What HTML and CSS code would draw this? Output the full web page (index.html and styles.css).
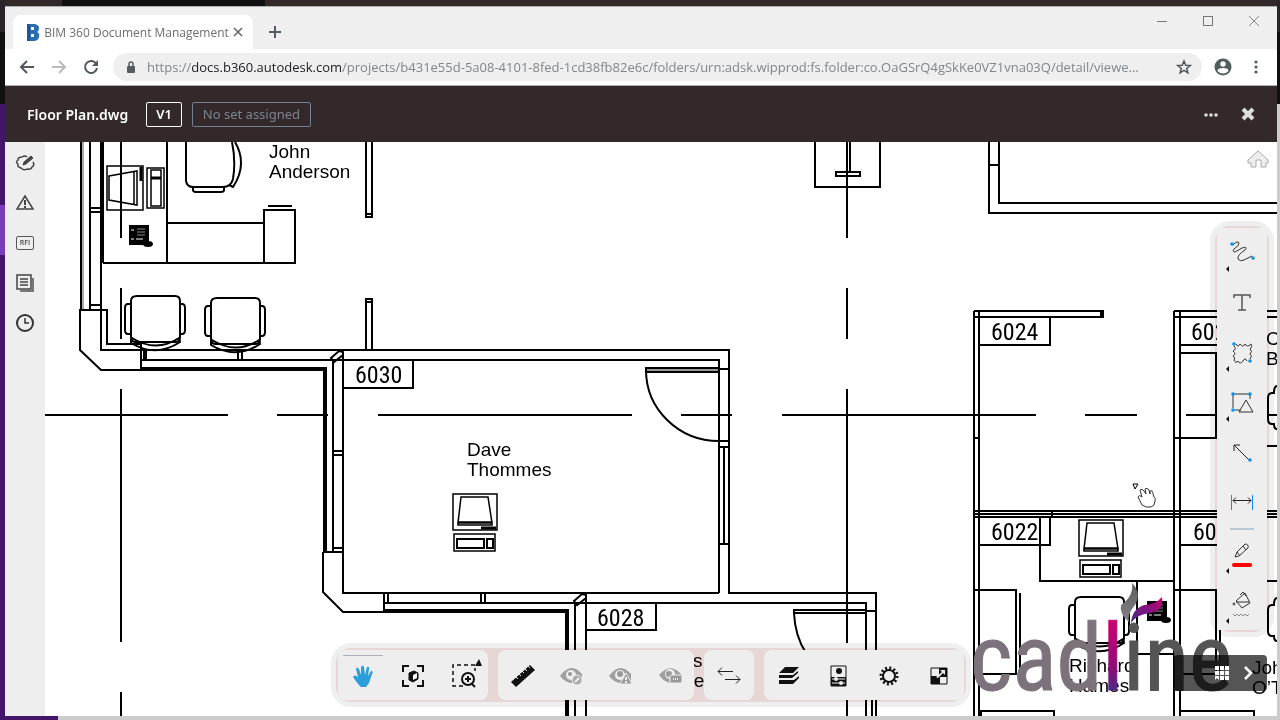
FILE: index.html
```html
<!DOCTYPE html>
<html lang="en">
<head>
<meta charset="utf-8">
<title>BIM 360 Document Management</title>
<link rel="stylesheet" href="styles.css">
</head>
<body>
<div class="window">
  <header class="tabstrip">
    <div class="tab">
      <svg class="favicon" viewBox="0 0 14 18" width="14" height="18"><path d="M1 1h8q4 1 4 4t-2 4q3 1 2 5t-5 4H1z" fill="#2b6db3"/><path d="M5 4h3v3H5zM5 11h3v3H5z" fill="#fff"/><path d="M1 1h3v17H1z" fill="#1d5596"/></svg>
      <span class="tab-title">BIM 360 Document Management</span>
      <button class="plain" aria-label="Close tab"><svg width="10" height="10" viewBox="0 0 10 10"><path d="M1 1l8 8M9 1L1 9" stroke="#5f6368" stroke-width="1.500"/></svg></button>
    </div>
    <button class="plain newtab" aria-label="New tab"><svg width="12" height="12" viewBox="0 0 12 12"><path d="M6 0v12M0 6h12" stroke="#555d60" stroke-width="2"/></svg></button>
    <div class="winbuttons">
      <button class="plain" aria-label="Minimize"><svg width="12" height="12" viewBox="0 0 12 12"><path d="M1 6.500h10" stroke="#777"/></svg></button>
      <button class="plain" aria-label="Maximize"><svg width="12" height="12" viewBox="0 0 12 12"><rect x="1.500" y="1.500" width="9" height="9" fill="none" stroke="#777"/></svg></button>
      <button class="plain" aria-label="Close"><svg width="12" height="12" viewBox="0 0 12 12"><path d="M1 1l10 10M11 1L1 11" stroke="#888"/></svg></button>
    </div>
  </header>

  <nav class="addressbar">
    <button class="plain" aria-label="Back"><svg width="16" height="16" viewBox="0 0 16 16"><path d="M15 8H2M8 2L2 8l6 6" fill="none" stroke="#4f595c" stroke-width="2"/></svg></button>
    <button class="plain" aria-label="Forward"><svg width="16" height="16" viewBox="0 0 16 16"><path d="M1 8h13M8 2l6 6-6 6" fill="none" stroke="#b9bbbc" stroke-width="2"/></svg></button>
    <button class="plain" aria-label="Reload"><svg width="16" height="16" viewBox="0 0 16 16"><path d="M13 4.500A6 6 0 1 0 14 9" fill="none" stroke="#4f595c" stroke-width="2"/><path d="M15 1v6H9z" fill="#4f595c"/></svg></button>
    <div class="omnibox">
      <svg width="10" height="13" viewBox="0 0 10 13"><rect x="1" y="5" width="8" height="7" rx="1" fill="#555d60"/><path d="M3 5V3a2 2 0 0 1 4 0v2" fill="none" stroke="#555d60" stroke-width="1.500"/></svg>
      <div class="url" role="textbox" aria-label="Address" contenteditable="true" spellcheck="false">https://<span class="host">docs.b360.autodesk.com</span>/projects/b431e55d-5a08-4101-8fed-1cd38fb82e6c/folders/urn:adsk.wipprod:fs.folder:co.OaGSrQ4gSkKe0VZ1vna03Q/detail/viewe...</div>
      <button class="plain" aria-label="Bookmark"><svg width="16" height="16" viewBox="0 0 16 16"><path d="M8 2l1.700 4.200 4.500.3-3.500 2.900 1.200 4.400L8 11.400l-3.900 2.400 1.200-4.400L1.800 6.500l4.500-.3z" fill="none" stroke="#4f595c" stroke-width="1.500"/></svg></button>
    </div>
    <button class="plain profile" aria-label="Profile"><svg width="18" height="18" viewBox="0 0 18 18"><circle cx="9" cy="9" r="8.500" fill="#4f5c60"/><circle cx="9" cy="6" r="2.700" fill="#fff"/><path d="M3.500 13q0-3 5.500-3t5.500 3Q12 15.500 9 15.500T3.500 13z" fill="#fff"/></svg></button>
    <button class="plain" aria-label="Menu"><svg width="6" height="14" viewBox="0 0 6 14"><g fill="#4f5c60"><circle cx="3" cy="2" r="1.600"/><circle cx="3" cy="7" r="1.600"/><circle cx="3" cy="12" r="1.600"/></g></svg></button>
  </nav>

  <header class="docbar">
    <h1 class="docname">Floor Plan.dwg</h1>
    <button class="version">V1</button>
    <button class="setname">No set assigned</button>
    <button class="plain more" aria-label="More"><svg width="16" height="6" viewBox="0 0 16 6"><g fill="#ddd"><circle cx="3" cy="4" r="1.800"/><circle cx="8" cy="4" r="1.800"/><circle cx="13" cy="4" r="1.800"/></g></svg></button>
    <button class="plain" aria-label="Close document"><svg width="14" height="14" viewBox="0 0 14 14"><path d="M2 2l10 10M12 2L2 12" stroke="#ddd" stroke-width="4"/></svg></button>
  </header>

  <main class="viewer">
    <aside class="rail">
      <button aria-label="Markups"><svg width="20" height="20" viewBox="0 0 20 20" fill="none" stroke="#444" stroke-width="1.500"><path d="M12 4Q10 2 7 4 3 4 3 7q-3 2 0 4-1 3 3 4 3 3 6 1 4 1 5-2 3-2 1-5"/><path d="M8 12l1-3 7-6 2 2-7 6z" fill="#444" stroke-width="1"/></svg></button>
      <button aria-label="Issues"><svg width="20" height="20" viewBox="0 0 20 20" fill="none" stroke="#444" stroke-width="1.500"><path d="M10 3l8 13H2z"/><path d="M10 7v5M10 13v2" stroke-width="2"/></svg></button>
      <button class="rfi" aria-label="Requests for information">RFI</button>
      <button aria-label="Sheets"><svg width="20" height="20" viewBox="0 0 20 20" fill="none" stroke="#444" stroke-width="1.500"><path d="M2 2h14v14H2zM5 6h8M5 9h8M5 12h8"/><path d="M18 5v13H5" stroke="#777" stroke-width="2"/></svg></button>
      <button aria-label="History"><svg width="20" height="20" viewBox="0 0 20 20" fill="none" stroke="#333" stroke-width="2"><circle cx="10" cy="10" r="8"/><path d="M10 5v5h4" stroke-width="1.500"/></svg></button>
    </aside>

    <section class="canvas">
      <svg class="plan" viewBox="45 142 1232 574" preserveAspectRatio="xMidYMid slice">
        <defs>
          <g id="seat"><path d="M6 0h38q5 0 5 5v36q0 5-5 5H5q-5 0-5-5V5q0-5 6-5z"/><path d="M0 8h-3q-3 0-3 4v22q0 4 3 4h3M49 8h2q3 0 3 4v22q0 4-3 4h-2"/><path d="M0 44l1-2q24 15 47 0l1 4Q25 62 0 47z"/></g>
          <g id="pc" stroke-width="1.500"><path d="M0 0h44v36H0zM8 3h27l4 26H5zM5 28h34v3H5z"/><path d="M28 34h15" stroke-width="3"/><path d="M1 40h41v17H1z"/><path d="M4 45h27v9H4zM34 45h6v9h-6z" stroke-width="2"/></g>
          <g id="phone"><path d="M0 0h18v18H0z" fill="#000"/><path d="M7 3h8M7 6h8M7 9h8" stroke="#888" stroke-width="1"/><path d="M1 4h3M1 13h3M6 13h7" stroke="#fff" stroke-width="1"/><ellipse cx="18" cy="18" rx="4" ry="2" fill="#000"/></g>
          <linearGradient id="stem" x1="0" y1="0" x2="0" y2="1"><stop offset=".2" stop-color="#c80070"/><stop offset=".6" stop-color="#8c0e78"/><stop offset=".8" stop-color="#4a2a86"/></linearGradient>
          <linearGradient id="leaf" x1="0" y1="1" x2="1" y2="0"><stop offset="0" stop-color="#4a2a86"/><stop offset=".5" stop-color="#7d1680"/><stop offset="1" stop-color="#d1006f"/></linearGradient>
          <linearGradient id="ash" x1="0" y1="0" x2="0" y2="1"><stop offset="0" stop-color="#555d5d"/><stop offset="1" stop-color="#8a8288"/></linearGradient>
        </defs>
        <g class="ink">
          <!-- grid axes -->
          <path d="M121 142v96M121 288v51M121 389v253M121 692v24M847 142v96M847 288v51M847 389v254M847 693v23"/>
          <path d="M45 415h183M277 415h51M378 415h254M681 415h51M782 415h254M1085 415h52M1186 415h91"/>
          <!-- office of John Anderson -->
          <path d="M81 142v168M90 142v168M101 142v168M103 142v121M90 208h11M90 212h11M90 305h11"/>
          <path d="M83 142v168" class="thin"/>
          <path d="M103 263h192M167 142v121M167 223h97M264 210h31v53h-31zM268 206h24"/>
          <path d="M107 166h36v44h-36zM109 176l28-5v34l-28-5zM134 172v33M147 168h17v40h-17zM151 170h10v36h-10z" stroke-width="1.500"/>
          <path d="M141 167v14M151 178h10" stroke-width="3"/>
          <path d="M186 142v39q1 6 7 6h30q8 0 10-8 3-18-1-37M193 187v3q0 2 3 2h25q3 0 3-2v-3M229 185l4 2q15-23 2-45"/>
          <path d="M366 142v75h6v-75M366 214h6M366 350v-51h6v51M366 302h6"/>
          <path d="M80 310h27v34h34v26h-40l-21-20zM101 310v40h628v243h147v123M141 360h578v233"/>
          <path d="M141 369h184v183" stroke-width="4"/>
          <path d="M144 350v10M146 350v10M238 350v10M242 350v10"/>
          <use href="#phone" x="130" y="226"/>
          <use href="#seat" x="131" y="296"/>
          <use href="#seat" x="211" y="298"/>
          <!-- room 6030 -->
          <path d="M333 360v192M343 352v241h376M331 358l8-7 4 1v3l-9 7zM333 451h10M333 455h10M333 548h10M323 552h20M323 552v40l20 20h41v-19"/>
          <path d="M343 360h70v28h-70zM719 441h10M719 447h10M724 447v97M719 544h10M719 369h10"/>
          <path d="M646 368h73v4h-73z" fill="#999"/>
          <path d="M646 370A73 71 0 0 0 719 441"/>
          <use href="#pc" x="453" y="494"/>
          <!-- room 6028 -->
          <path d="M384 603h482v113M388 593v10M481 593v10M485 593v10M575 603v113M586 595v121M574 601l8-7 4 1v3l-9 7zM586 603h70v27h-70zM867 611h10M872 700v16"/>
          <path d="M384 611h183v105" stroke-width="4"/>
          <path d="M794 610h72v3h-72zM794 613q1 23 12 40"/>
          <!-- upper core -->
          <path d="M815 142v45h65v-45M847 142v30M850 142v30M836 172h24v4h-24zM989 142v71h288M999 142v61h278M989 165h10"/>
          <!-- right hand cubicles -->
          <path d="M974 311v405M979 311v405M974 311h129v6H974M1101 311v6M979 345h71v-28M974 438h5M1174 311v405M1180 311v405M1174 311h103M1174 317h103M1180 345h70v-28M1180 353h36v85h-42"/>
          <path d="M974 511h303M974 514h303M974 517h303M979 545h71v-28M1052 511v6M1180 545h70M1040 517v64h134M1137 582v72h37"/>
          <path d="M974 590h42v84h-42M1020 593v78M1174 590h42v84h-42M1220 593v78M979 711h75v5M981 711v5M1180 711h74v5M1267 446h10M1267 581h10"/>
          <path d="M1277 386q-3 0-3 7h-2q-4 0-4 5v21q0 5 4 5h2q0 5 3 5M1277 598q-3 0-3 7h-2q-4 0-4 5v21q0 5 4 5h2q0 5 3 5"/>
          <use href="#pc" x="1079" y="520"/>
          <use href="#seat" x="1075" y="597"/>
          <use href="#phone" x="1148" y="602"/>
        </g>
        <g class="person">
          <text x="269" y="158">John</text><text x="269" y="178">Anderson</text>
          <text x="467" y="456">Dave</text><text x="467" y="476">Thommes</text>
          <text x="693" y="667">s</text><text x="681" y="687">Pe</text>
          <text x="1069" y="672">Richard</text><text x="1069" y="692">Hames</text>
          <text x="1252" y="674">Joh</text><text x="1252" y="694">O’T</text>
          <text x="1266" y="345">C</text><text x="1266" y="365">B</text>
        </g>
        <g class="room">
          <text x="355" y="383">6030</text><text x="597" y="626">6028</text><text x="991" y="340">6024</text><text x="991" y="540">6022</text>
          <text x="1191" y="340">602</text><text x="1193" y="540">602</text>
        </g>
        <!-- cadline watermark -->
        <text class="wordmark" x="970" y="690"><tspan fill="#7c727b" stroke="#7c727b">cad</tspan><tspan fill="url(#stem)" stroke="url(#stem)">l</tspan><tspan fill="#555" stroke="#555">ine</tspan></text>
        <path d="M1132 583q10 10 3 22-8 9-6 17-10-8-8-17 13-9 11-22z" fill="url(#ash)"/>
        <path d="M1162 597q2 13-11 16-14 1-20 10 1-14 13-18 11 0 18-8z" fill="url(#leaf)"/>
        <!-- home -->
        <path d="M1248 160l10-9 10 9v3h-2v4h-5v-7h-5v7h-5v-4h-3z" fill="#eee" stroke="#aaa"/>
        <!-- pan cursor -->
        <path d="M1133 484h5l-3 5z" fill="#fff" stroke="#000"/>
        <path d="M1142 505l-4-8q1-3 4 0l-2-7q2-2 4 1l2 3-1-5q2-2 4 1l1 4 0-3q3-1 3 3l1 3q2 1 1 4 0 5-4 6-5 1-9-2z" fill="#fff" stroke="#333"/>
      </svg>

      <div class="palette" role="toolbar" aria-label="Markup tools">
        <div class="halo"></div>
        <button class="flyout" aria-label="Freehand"><svg width="26" height="26" viewBox="0 0 26 26" fill="none" stroke="#333"><path d="M4 5q5-5 6-2 0 3-5 6-2 3 1 3l7-4q6-2 3 2-8 5-7 9 2 3 6 1l8-4"/><g fill="#0a91e8" stroke="none"><circle cx="3" cy="4" r="1.800"/><circle cx="24" cy="18" r="1.800"/></g></svg></button>
        <button aria-label="Text"><svg width="26" height="26" viewBox="0 0 26 26" fill="none" stroke="#555" stroke-width="1.500"><path d="M5 8V5h16v3M13 5v15M9 20h8"/></svg></button>
        <button class="flyout" aria-label="Cloud"><svg width="26" height="26" viewBox="0 0 26 26" fill="none" stroke="#333"><path d="M7 4q2 4 4 0 3 4 5 0 2 4 6 0 2 3-1 5 3 2 0 5 3 2 0 5M18 21q-2-4-4 0-3 4-5 0-2 3-4-1 2-2-1-4 4-2 0-5 4-2 1-5"/><g fill="#0a91e8" stroke="none"><circle cx="5" cy="4" r="1.800"/><circle cx="21" cy="21" r="1.800"/></g></svg></button>
        <button class="flyout" aria-label="Shapes"><svg width="26" height="26" viewBox="0 0 26 26" fill="none" stroke="#333"><path d="M4 18V4h17v5M6 20h6M10 22l7-12 7 12z"/><g fill="#0a91e8" stroke="none"><circle cx="4" cy="4" r="1.800"/><circle cx="21" cy="4" r="1.800"/><circle cx="4" cy="20" r="1.800"/></g></svg></button>
        <button aria-label="Arrow"><svg width="26" height="26" viewBox="0 0 26 26" fill="none" stroke="#222"><path d="M20 20L5 5M5 11V5h6"/><circle cx="21" cy="20" r="1.800" fill="#0a91e8" stroke="none"/></svg></button>
        <button aria-label="Dimension"><svg width="26" height="26" viewBox="0 0 26 26" fill="none" stroke="#222"><path d="M4 10.500h18M7 7.500l-3 3 3 3M19 7.500l3 3-3 3"/><path d="M2.500 5v15M23.500 5v15" stroke="#0a91e8"/></svg></button>
        <hr>
        <button class="flyout" aria-label="Line colour"><svg width="26" height="30" viewBox="0 0 26 30" fill="none" stroke="#333"><path d="M6 17l2-5L16 4q4 0 3 4l-9 8zM8 12l3 4M14 6l3 4"/><path d="M5 25h16" stroke="#f00" stroke-width="4" stroke-linecap="round"/></svg></button>
        <button class="flyout" aria-label="Fill"><svg width="26" height="30" viewBox="0 0 26 30" fill="none" stroke="#333"><path d="M7 11l9-8 5 10-8 5-5-6zM7 12h13M11 5l3-3 3 4"/><circle cx="5" cy="14" r="1"/><path d="M4 24l2 2 2-2 2 2 2-2 2 2 2-2 2 2 2-2" stroke="#888"/></svg></button>
      </div>

      <div class="dock" role="toolbar" aria-label="Viewer tools">
        <div class="halo"></div>
        <div class="group">
          <button class="active" aria-label="Pan"><svg width="22" height="24" viewBox="0 0 22 24"><path d="M6 20L1 13q1-3 5 0L4 5q1-3 3 0l2 6V3q2-3 3 0l1 8 2-8q3-1 2 2l-1 7 3-5q3 0 1 3l-3 9-3 4H9z" fill="#2c9fda"/></svg></button>
          <button aria-label="Fit to view"><svg width="24" height="24" viewBox="0 0 24 24" fill="none" stroke="#111" stroke-width="2"><path d="M2 8V2h6M16 2h6v6M22 16v6h-6M8 22H2v-6"/><path d="M8 9l5-2 4 2v6l-5 3-4-2z" stroke-width="1" fill="#111"/><path d="M12 11l4-2v5l-4 2z" fill="#fff" stroke="none"/></svg></button>
          <button class="zoom" aria-label="Zoom"><svg width="32" height="32" viewBox="0 0 32 32" fill="none" stroke="#111" stroke-width="1.500"><path d="M13 28H3V7h22v6" stroke-dasharray="4 3"/><circle cx="18" cy="21" r="6" stroke-width="2"/><path d="M15 21h6M18 18v6M22 26l3 3" stroke-width="2"/><path d="M29 1l3 7h-7z" fill="#111" stroke="none"/></svg></button>
        </div>
        <div class="group narrow">
          <button aria-label="Measure"><svg width="26" height="26" viewBox="0 0 26 26"><path d="M20 2l5 5L6 24l-5-5z" fill="#111"/><path d="M6 14l2 2M9 11l2 2M12 8l2 2M15 6l2 2M18 3l2 2" stroke="#eee"/></svg></button>
          <button aria-label="Markup visibility"><svg width="26" height="20" viewBox="0 0 26 20"><path d="M1 10Q12-5 23 8v7Q9 21 1 10z" fill="#a0a0a0"/><circle cx="12" cy="9" r="5" fill="#eee"/><circle cx="11" cy="8" r="2" fill="#999"/><circle cx="18" cy="14" r="5" fill="#aaa" stroke="#eee"/><path d="M16 16l4-4" stroke="#eee" stroke-width="2"/></svg></button>
          <button aria-label="Issue visibility"><svg width="26" height="20" viewBox="0 0 26 20"><path d="M1 10Q12-5 23 8v7Q9 21 1 10z" fill="#a0a0a0"/><circle cx="12" cy="9" r="5" fill="#eee"/><circle cx="12" cy="8" r="3" fill="#999"/><path d="M18 7l6 11H12z" fill="#999" stroke="#eee"/><path d="M18 11v3M18 15v2" stroke="#eee" stroke-width="2"/></svg></button>
          <button aria-label="RFI visibility"><svg width="26" height="20" viewBox="0 0 26 20"><path d="M2 9Q13-4 24 8v7Q10 21 2 9z" fill="#a0a0a0"/><circle cx="13" cy="8" r="5" fill="#eee"/><circle cx="12" cy="8" r="3" fill="#999"/><rect x="13" y="9" width="12" height="8" rx="1" fill="#999" stroke="#eee"/><path d="M16 13h6" stroke="#eee" stroke-width="2" stroke-dasharray="1 1"/></svg></button>
        </div>
        <div class="group">
          <button aria-label="Compare"><svg width="26" height="20" viewBox="0 0 26 20" fill="none" stroke="#222"><path d="M17 5.500H2M6 1.500l-4 4 4 4M9 13.500h15M20 9.500l4 4-4 4"/></svg></button>
        </div>
        <div class="group">
          <button aria-label="Layers"><svg width="22" height="20" viewBox="0 0 22 20" fill="#111"><path d="M7 1h14l-6 6H1zM1 9h14l5-4v2l-6 5H1zM1 14h15l5-4v2l-6 6H1z"/></svg></button>
          <button aria-label="Properties"><svg width="18" height="22" viewBox="0 0 18 22"><path d="M1 1h15v20H1z" fill="#eee" stroke="#111"/><circle cx="9" cy="6" r="3" fill="#111"/><path d="M1 12h15v9H1z" fill="#111"/><path d="M2 14h13M2 18h13" stroke="#eee"/><circle cx="6" cy="14" r="2" fill="#eee"/><circle cx="11" cy="18" r="2" fill="#eee"/></svg></button>
          <button aria-label="Settings"><svg width="20" height="20" viewBox="0 0 20 20" fill="none" stroke="#111"><circle cx="10" cy="10" r="6" stroke-width="2"/><circle cx="10" cy="10" r="8" stroke-width="3" stroke-dasharray="2 2.190"/></svg></button>
          <button aria-label="Full screen"><svg width="18" height="18" viewBox="0 0 18 18"><path d="M1 1h16v16H1z" fill="#eee" stroke="#111"/><path d="M9 1h8v9h-7v7H1V9h8z" fill="#111"/><path d="M10 3h5v5l-2-2-5 5-2-1 6-5z" fill="#eee"/></svg></button>
        </div>
      </div>

      <div class="pager">
        <button class="plain" aria-label="Grid"><svg width="14" height="14" viewBox="0 0 14 14" fill="#fff"><path d="M0 0h4v4H0zM5 0h4v4H5zM10 0h4v4h-4zM0 5h4v4H0zM5 5h4v4H5zM10 5h4v4h-4zM0 10h4v4l-2-2-2 2zM5 10h4v4H5zM10 10h4v4h-4z"/></svg></button>
        <button class="plain" aria-label="Next"><svg width="10" height="14" viewBox="0 0 10 14"><path d="M2 1l6 6-6 6" fill="none" stroke="#fff" stroke-width="2.500"/></svg></button>
      </div>
    </section>
  </main>
</div>
</body>
</html>
```
FILE: styles.css
```css
* { box-sizing: border-box; }

body {
  margin: 0;
  height: 100vh;
  padding: 6px 3px 4px 5px;
  overflow: hidden;
  font-family: "Open Sans", "Noto Sans", sans-serif;
  background:
    linear-gradient(#43156b, #43156b) left bottom / 58px 4px no-repeat,
    linear-gradient(#7a3db8, #7a3db8) 0 205px / 5px 50px no-repeat,
    linear-gradient(#2a2327 32px, #101010 32px, #101010 104px, #43156b 104px) left top / 5px 100% no-repeat,
    linear-gradient(#2a2327 32px, #101010 32px, #101010 104px, #ccc 104px) right top / 3px 100% no-repeat,
    linear-gradient(90deg, #332828 62px, #101010 62px, #101010 265px, #332828 265px) left top / 100% 6px no-repeat,
    #ccc;
}

button { font: inherit; cursor: pointer; }

.plain {
  display: flex;
  align-items: center;
  justify-content: center;
  padding: 0;
  border: 0;
  background: none;
}

.window {
  display: flex;
  flex-direction: column;
  height: 100%;
  background: #fff;
}

.tabstrip {
  display: flex;
  align-items: flex-end;
  height: 43px;
  padding-left: 8px;
  background: #efefef;
  border-top: 1px solid #aab0b2;
}

.tab {
  display: flex;
  align-items: center;
  justify-content: space-between;
  width: 240px;
  height: 34px;
  padding: 0 10px 0 13px;
  border-radius: 8px 8px 0 0;
  background: #fff;
}

.tab-title { font-size: 12px; color: #6d6d6d; white-space: nowrap; }
.newtab { width: 44px; height: 34px; }

.winbuttons { display: flex; align-self: flex-start; gap: 34px; margin: 8px 17px 0 auto; }

.addressbar {
  display: flex;
  align-items: center;
  height: 37px;
  gap: 16px;
  padding: 0 18px 0 14px;
  border-bottom: 1px solid #b0b0b0;
}

.omnibox {
  display: flex;
  flex: 1;
  align-items: center;
  min-width: 0;
  height: 28px;
  gap: 11px;
  padding: 0 10px 0 13px;
  margin-left: -2px;
  border-radius: 14px;
  background: #efefef;
}

.url {
  flex: 1;
  min-width: 0;
  overflow: hidden;
  font-size: 13px;
  line-height: 20px;
  white-space: nowrap;
  color: #80868b;
}
.host { color: #202124; }
.profile { margin: 0 5px 0 -4px; }

.docbar {
  display: flex;
  align-items: center;
  height: 56px;
  padding: 0 22px;
  background: #33292a;
}

.docname { margin: 0 18px 0 0; font-family: "Noto Sans", sans-serif; font-size: 14px; font-weight: 600; color: #fff; }

.version, .setname {
  height: 25px;
  padding: 0 10px;
  border: 1px solid #fff;
  border-radius: 2px;
  background: none;
  font-family: "Noto Sans", sans-serif;
  font-size: 13px;
  line-height: 20px;
  color: #fff;
}
.version { padding: 0 9px; font-weight: 600; }
.setname { margin-left: 10px; border-color: #74808f; color: #7c8490; }
.more { margin: 0 22px 0 auto; }

.viewer { display: flex; flex: 1; min-height: 0; }

.rail {
  display: flex;
  flex-direction: column;
  width: 40px;
  padding-top: 1px;
  background: #eee;
}
.rail button {
  display: flex;
  align-items: center;
  justify-content: center;
  height: 40px;
  padding: 0;
  border: 0;
  background: none;
}
.rail .rfi {
  width: 16px;
  height: 12px;
  margin: 14px 12px;
  border-radius: 1px;
  outline: 1px solid #555;
  font-size: 7px;
  font-weight: 600;
  line-height: 12px;
  color: #444;
}

.canvas { position: relative; flex: 1; min-width: 0; overflow: hidden; background: #fff; }

.plan { display: block; width: 100%; height: 100%; }
.ink { fill: none; stroke: #000; stroke-width: 2; }
.thin { stroke: #555; stroke-width: 1; }
.person { font-family: "Liberation Sans", sans-serif; font-size: 19px; }
.room { font-family: "Roboto Condensed", "Open Sans Condensed", Roboto, sans-serif; font-size: 24px; }
.wordmark {
  font-family: "Roboto Condensed", "DejaVu Sans Condensed", sans-serif;
  font-size: 92px;
  stroke-width: 1;
}

.halo {
  position: absolute;
  inset: -7px;
  border: 5px solid #efefef;
  border-radius: 20px;
  background: #e6d6d5;
  mix-blend-mode: multiply;
}

.palette { position: absolute; top: 86px; right: 10px; width: 50px; }
.palette button {
  position: relative;
  display: flex;
  align-items: center;
  justify-content: center;
  width: 50px;
  height: 50px;
  padding: 0;
  border: 0;
  background: #eee;
}
.palette hr {
  position: relative;
  height: 2px;
  margin: 0;
  border: 0;
  background: linear-gradient(90deg, #eee 13px, #bcc8d2 13px, #bcc8d2 37px, #eee 37px);
}
.flyout::after {
  content: "";
  position: absolute;
  bottom: 6px;
  left: 9px;
  border: solid transparent;
  border-width: 3px 3px 3px 0;
  border-right-color: #111;
}

.dock {
  position: absolute;
  right: 20px;
  bottom: 16px;
  left: 0;
  display: flex;
  gap: 10px;
  width: fit-content;
  margin: 0 auto;
}
.group { position: relative; display: flex; border-radius: 8px; background: #eee; }
.group button {
  display: flex;
  align-items: center;
  justify-content: center;
  width: 50px;
  height: 50px;
  padding: 2px 0 0;
  border: 0;
  background: none;
}
.narrow button { width: 49px; }
.group .active { background: linear-gradient(#b0b0bc, #b0b0bc) 50% 5px / 40px 1px no-repeat; }
.group .zoom { padding: 0 0 2px 6px; }

.pager {
  position: absolute;
  right: 10px;
  bottom: 25px;
  display: flex;
  align-items: center;
  justify-content: flex-end;
  gap: 14px;
  width: 93px;
  height: 36px;
  padding-right: 14px;
}
.pager::before {
  content: "";
  position: absolute;
  inset: 0;
  border-radius: 4px;
  background: #555;
  mix-blend-mode: multiply;
}
.pager button { position: relative; }
```
